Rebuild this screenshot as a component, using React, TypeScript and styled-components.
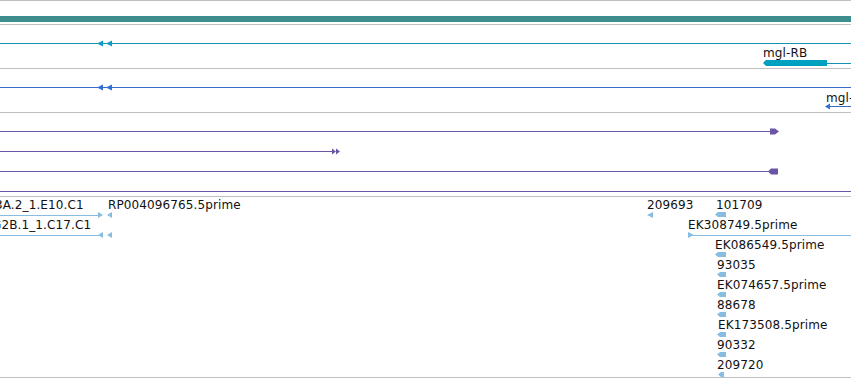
import React from "react";
import styled, { createGlobalStyle } from "styled-components";

const Global = createGlobalStyle`
  html, body { margin: 0; padding: 0; background: #ffffff; }
  body { width: 851px; height: 380px; overflow: hidden; }
`;

const Browser = styled.div`
  width: 851px;
  height: 380px;
  display: flex;
  flex-direction: column;
  border-top: 1px solid #c0c0c0;
  box-sizing: border-box;
  font-family: "DejaVu Sans", "Liberation Sans", sans-serif;
  overflow: hidden;
`;

const Track = styled.div<{ $h: number }>`
  position: relative;
  flex: 0 0 auto;
  height: ${(p) => p.$h}px;
  border-bottom: 1px solid #c0c0c0;
  overflow: hidden;
`;

const Glyphs = styled.svg`
  position: absolute;
  left: 0;
  top: 0;
  width: 851px;
  height: 100%;
  shape-rendering: crispEdges;
`;

const Label = styled.span<{ $x: number; $y: number }>`
  position: absolute;
  left: ${(p) => p.$x}px;
  top: ${(p) => p.$y}px;
  font-size: 12px;
  line-height: 14px;
  letter-spacing: 0.12px;
  color: #111;
  white-space: nowrap;
`;

const C = {
  ruler: "#3f8e8f",
  teal: "#1693b3",
  tealHead: "#0d9cc4",
  tealBar: "#00a0c0",
  blue: "#3a6bc8",
  blueHead: "#2f6fd6",
  purple: "#6b55a5",
  est: "#86bde0",
};

type HeadProps = { x: number; y: number; c: string; w?: number; h?: number };

// left-pointing arrowhead with tip at x
const LeftHead = ({ x, y, c, w = 5, h = 6 }: HeadProps) => (
  <polygon points={`${x},${y + h / 2} ${x + w},${y} ${x + w},${y + h}`} fill={c} shapeRendering="geometricPrecision" />
);
const RightHead = ({ x, y, c, w = 5, h = 6 }: HeadProps) => (
  <polygon points={`${x},${y} ${x + w},${y + h / 2} ${x},${y + h}`} fill={c} shapeRendering="geometricPrecision" />
);
// block with pointed left end (tip at x)
const LeftBlock = ({ x, y, w, c, h = 5 }: { x: number; y: number; w: number; c: string; h?: number }) => (
  <polygon
    points={`${x},${y + h / 2} ${x + 3},${y} ${x + w},${y} ${x + w},${y + h} ${x + 3},${y + h}`}
    fill={c}
    shapeRendering="geometricPrecision"
  />
);
const RightBlock = ({ x, y, w, c, h = 6 }: { x: number; y: number; w: number; c: string; h?: number }) => (
  <polygon
    points={`${x},${y} ${x + w - 4},${y} ${x + w},${y + h / 2} ${x + w - 4},${y + h} ${x},${y + h}`}
    fill={c}
    shapeRendering="geometricPrecision"
  />
);

const estRows = [
  { label: "EK086549.5prime", x: 715, ax: 715, aw: 11 },
  { label: "93035", x: 717, ax: 717, aw: 9 },
  { label: "EK074657.5prime", x: 717, ax: 717, aw: 9 },
  { label: "88678", x: 717, ax: 717, aw: 9 },
  { label: "EK173508.5prime", x: 718, ax: 717, aw: 9 },
  { label: "90332", x: 717, ax: 717, aw: 9 },
  { label: "209720", x: 717, ax: 718, aw: 6 },
];

export default function App() {
  return (
    <>
      <Global />
      <Browser>
        <Track $h={23}>
          <Glyphs>
            <rect x={0} y={15} width={851} height={6} fill={C.ruler} />
          </Glyphs>
        </Track>

        <Track $h={43}>
          <Glyphs>
            <rect x={0} y={18} width={851} height={1} fill={C.teal} />
            <LeftHead x={97} y={15.5} c={C.tealHead} w={6} h={6} />
            <LeftHead x={106} y={15.5} c={C.tealHead} w={6} h={6} />
            <LeftBlock x={763} y={35} w={64} h={6} c={C.tealBar} />
            <rect x={827} y={38} width={24} height={1} fill={C.teal} />
          </Glyphs>
          <Label $x={763} $y={21}>mgl-RB</Label>
        </Track>

        <Track $h={43}>
          <Glyphs>
            <rect x={0} y={18} width={851} height={1} fill={C.blue} />
            <LeftHead x={97} y={15.5} c={C.blueHead} w={6} h={6} />
            <LeftHead x={106} y={15.5} c={C.blueHead} w={6} h={6} />
            <LeftHead x={825} y={34.5} c={C.blueHead} w={5} h={6} />
            <rect x={829} y={37} width={22} height={1} fill={C.blue} />
          </Glyphs>
          <Label $x={826} $y={22}>mgl-</Label>
        </Track>

        <Track $h={83}>
          <Glyphs>
            <rect x={0} y={18} width={771} height={1} fill={C.purple} />
            <RightBlock x={770} y={15.5} w={9} h={6} c={C.purple} />
            <rect x={0} y={38} width={333} height={1} fill={C.purple} />
            <RightHead x={332} y={35.5} c={C.purple} w={4} h={6} />
            <RightHead x={336} y={35.5} c={C.purple} w={4} h={6} />
            <rect x={0} y={58} width={769} height={1} fill={C.purple} />
            <LeftBlock x={768} y={55.5} w={10} h={6} c={C.purple} />
            <rect x={0} y={78} width={851} height={1} fill={C.purple} />
          </Glyphs>
        </Track>

        <Track $h={180}>
          <Glyphs>
            <rect x={0} y={18} width={99} height={1} fill={C.est} />
            <RightHead x={98} y={15} c={C.est} w={5} h={6} />
            <LeftHead x={107} y={15} c={C.est} w={5} h={6} />
            <rect x={0} y={38} width={99} height={1} fill={C.est} />
            <LeftHead x={98} y={35} c={C.est} w={5} h={6} />
            <LeftHead x={107} y={35} c={C.est} w={5} h={6} />
            <LeftHead x={647} y={15} c={C.est} w={6} h={6} />
            <LeftBlock x={715} y={15} w={11} h={5} c={C.est} />
            <RightHead x={688} y={35} c={C.est} w={6} h={6} />
            <rect x={688} y={38} width={163} height={1} fill={C.est} />
            {estRows.map((r, i) => (
              <LeftBlock key={r.label} x={r.ax} y={55 + i * 20} w={r.aw} h={5} c={C.est} />
            ))}
          </Glyphs>
          <Label $x={-5} $y={1}>3A.2_1.E10.C1</Label>
          <Label $x={-8} $y={21}>G2B.1_1.C17.C1</Label>
          <Label $x={108} $y={1}>RP004096765.5prime</Label>
          <Label $x={647} $y={1}>209693</Label>
          <Label $x={716} $y={1}>101709</Label>
          <Label $x={688} $y={21}>EK308749.5prime</Label>
          {estRows.map((r, i) => (
            <Label key={r.label} $x={r.x} $y={41 + i * 20}>
              {r.label}
            </Label>
          ))}
        </Track>
      </Browser>
    </>
  );
}
